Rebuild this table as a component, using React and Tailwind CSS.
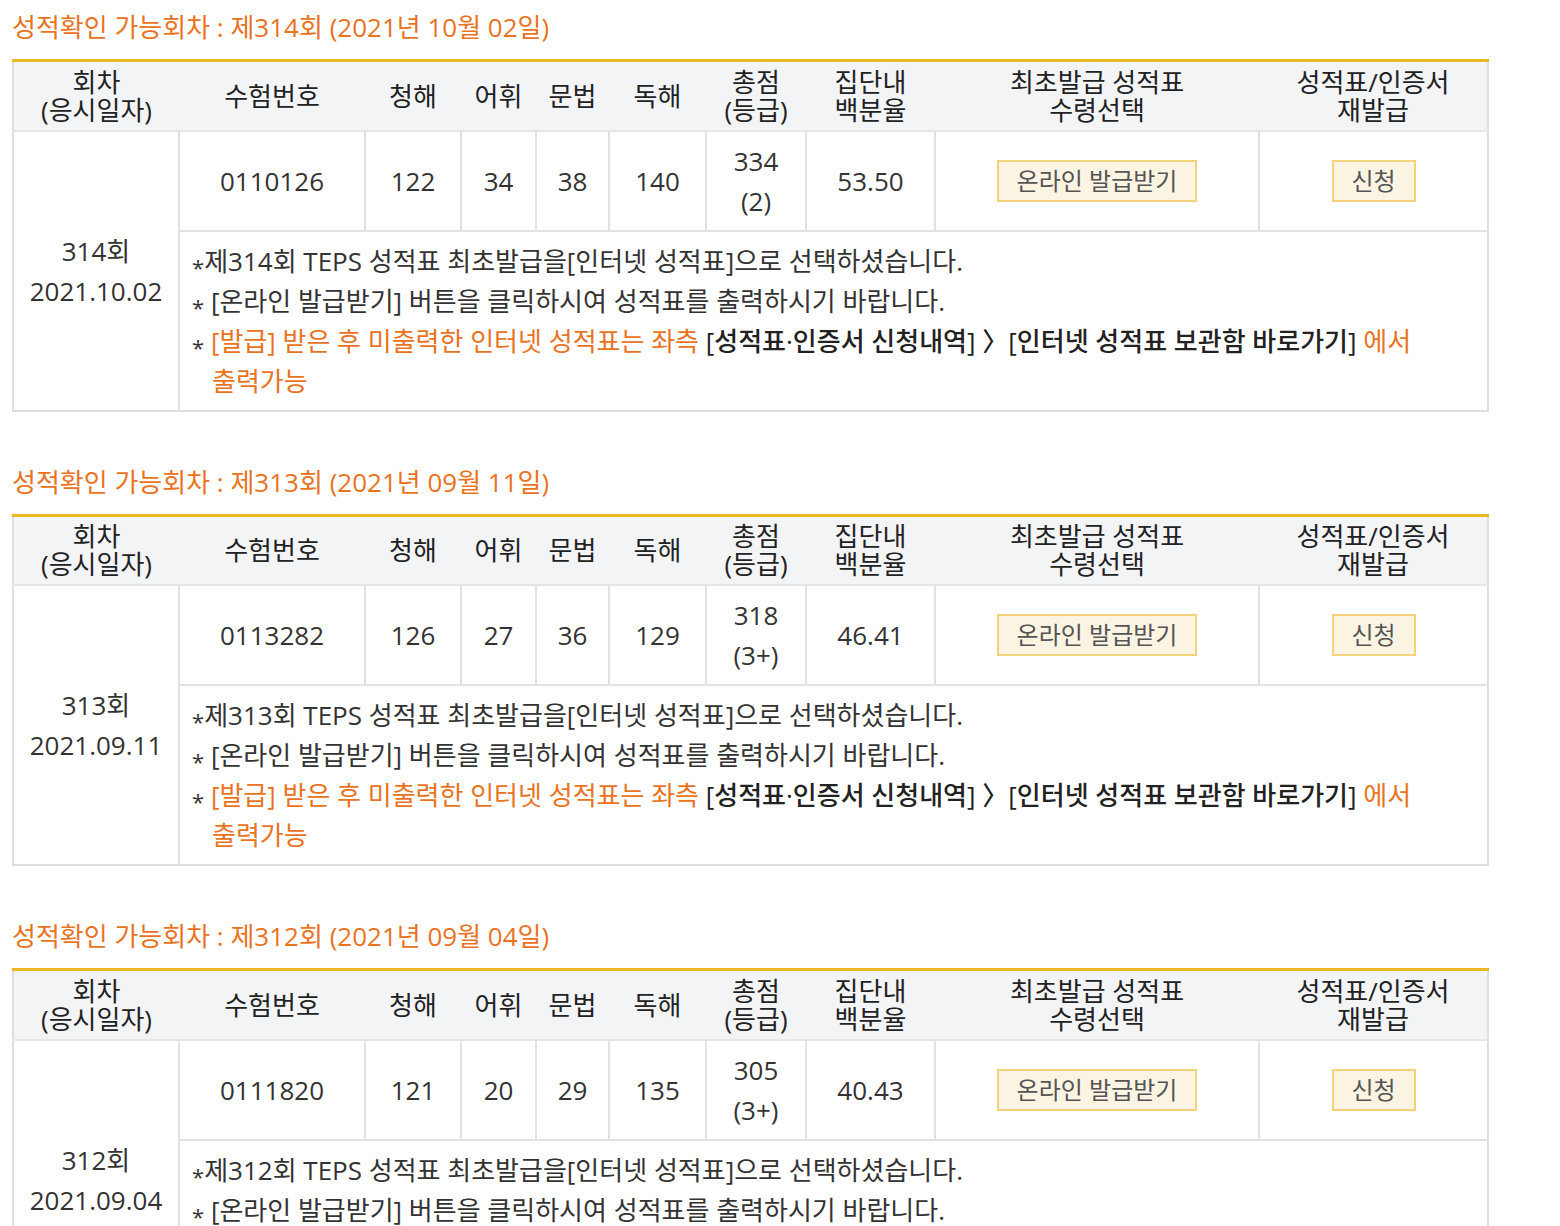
import React from "react";

const rounds = [
  {
    no: "314",
    title: "제314회 (2021년 10월 02일)",
    date: "2021.10.02",
    examNo: "0110126",
    listening: "122",
    vocab: "34",
    grammar: "38",
    reading: "140",
    total: "334",
    grade: "(2)",
    percent: "53.50",
  },
  {
    no: "313",
    title: "제313회 (2021년 09월 11일)",
    date: "2021.09.11",
    examNo: "0113282",
    listening: "126",
    vocab: "27",
    grammar: "36",
    reading: "129",
    total: "318",
    grade: "(3+)",
    percent: "46.41",
  },
  {
    no: "312",
    title: "제312회 (2021년 09월 04일)",
    date: "2021.09.04",
    examNo: "0111820",
    listening: "121",
    vocab: "20",
    grammar: "29",
    reading: "135",
    total: "305",
    grade: "(3+)",
    percent: "40.43",
  },
];

const widths = [166, 186, 96, 75, 73, 97, 100, 129, 324, 229];

const cell = "border-l-2 border-[#e2e2e2] text-center align-middle";

// small centered asterisk like the original page's bullet
const Star = () => (
  <span className="inline-block indent-0 translate-y-[5px] text-[22px] leading-none">*</span>
);

const ScoreTable = ({ r }) => (
  <table className="w-[1476px] table-fixed border-collapse ml-[12px] border-2 border-[#dedede]">
    <colgroup>
      {widths.map((w, i) => (
        <col key={i} style={{ width: w }} />
      ))}
    </colgroup>
    <thead>
      <tr className="h-[70px] bg-[#f3f4f6] text-[#222] leading-[28px] border-t-[3px] border-t-[#e9b822] border-b-2 border-b-[#e6e6e6]">
        <th className="font-normal">회차<br />(응시일자)</th>
        <th className="font-normal">수험번호</th>
        <th className="font-normal">청해</th>
        <th className="font-normal">어휘</th>
        <th className="font-normal">문법</th>
        <th className="font-normal">독해</th>
        <th className="font-normal">총점<br />(등급)</th>
        <th className="font-normal">집단내<br />백분율</th>
        <th className="font-normal">최초발급 성적표<br />수령선택</th>
        <th className="font-normal">성적표/인증서<br />재발급</th>
      </tr>
    </thead>
    <tbody className="text-[#333] leading-[40px]">
      <tr className="h-[100px] border-b-2 border-[#e2e2e2]">
        <td rowSpan={2} className="text-center align-middle">
          {r.no}회<br />{r.date}
        </td>
        <td className={cell}>{r.examNo}</td>
        <td className={cell}>{r.listening}</td>
        <td className={cell}>{r.vocab}</td>
        <td className={cell}>{r.grammar}</td>
        <td className={cell}>{r.reading}</td>
        <td className={cell}>
          {r.total}<br />{r.grade}
        </td>
        <td className={cell}>{r.percent}</td>
        <td className={cell}>
          <button className="h-[42px] w-[200px] border-2 border-[#f3d27a] bg-[#fcf4e3] text-[24px] text-[#555] leading-[38px]">
            온라인 발급받기
          </button>
        </td>
        <td className={cell}>
          <button className="h-[42px] w-[84px] border-2 border-[#f3d27a] bg-[#fcf4e3] text-[24px] text-[#555] leading-[38px]">
            신청
          </button>
        </td>
      </tr>
      <tr>
        <td colSpan={9} className="border-l-2 border-[#e2e2e2] pl-[12px] pr-[50px] pt-[9px] pb-[9px] text-left align-top break-keep">
          <p>
            <Star />제{r.no}회 TEPS 성적표 최초발급을[인터넷 성적표]으로 선택하셨습니다.
          </p>
          <p>
            <Star /> [온라인 발급받기] 버튼을 클릭하시여 성적표를 출력하시기 바랍니다.
          </p>
          <p className="pl-[20px] -indent-[20px]">
            <Star />{" "}
            <span className="text-[#e9731f]">[발급] 받은 후 미출력한 인터넷 성적표는 좌측 </span>
            <span className="font-medium text-[#222]">
              [성적표·인증서 신청내역] 〉[인터넷 성적표 보관함 바로가기]
            </span>
            <span className="text-[#e9731f]"> 에서 출력가능</span>
          </p>
        </td>
      </tr>
    </tbody>
  </table>
);

const App = () => {
  return (
    <div
      className="w-[1560px] h-[1226px] overflow-hidden bg-white text-[26px]"
      style={{ fontFamily: '"Open Sans", "Noto Sans CJK KR", sans-serif' }}
    >
      {rounds.map((r) => (
        <section key={r.no} className="pt-[9px] pb-[43px]">
          <h2 className="ml-[12px] mb-[14px] text-[26px] leading-[36px] text-[#e9731f]">
            성적확인 가능회차 : {r.title}
          </h2>
          <ScoreTable r={r} />
        </section>
      ))}
    </div>
  );
};

export default App;
